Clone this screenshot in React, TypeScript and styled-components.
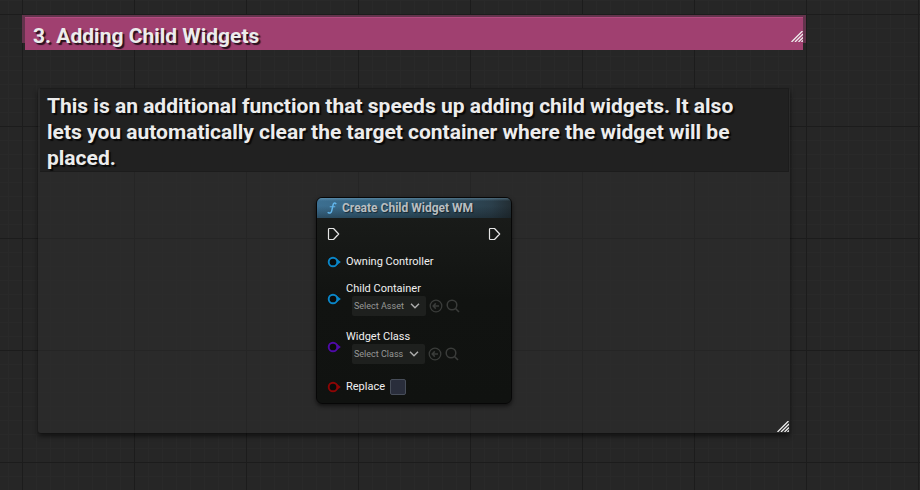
import React from "react";
import styled, { createGlobalStyle } from "styled-components";

const GlobalStyle = createGlobalStyle`
  * { box-sizing: border-box; }
  body {
    margin: 0;
    background: #262626;
    color: #ececec;
    font-family: Roboto, "Liberation Sans", sans-serif;
  }
  h1, h2, p { margin: 0; font: inherit; }
`;

const Canvas = styled.main`
  min-height: 100vh;
  padding: 15px 114px 56px 22px;
  background-color: #262626;
  background-image:
    linear-gradient(90deg, #1c1c1c 1px, transparent 1px),
    linear-gradient(#1c1c1c 1px, transparent 1px),
    linear-gradient(90deg, #292929 1px, transparent 1px),
    linear-gradient(#292929 1px, transparent 1px);
  background-size: 112px 112px, 112px 112px, 14px 14px, 14px 14px;
  background-position: 22px 14px, 22px 14px, 8px 0, 8px 0;
`;

const TitleComment = styled.section`
  padding: 2px 3px 0;
  background: linear-gradient(#63334c, #63334c) 0 0 / 100% 28px no-repeat;
`;

const TitleBar = styled.header`
  display: flex;
  align-items: center;
  justify-content: space-between;
  height: 33px;
  padding: 4px 0 0 8px;
  background: #a04070;
  border-top: 1px solid #b34c80;
`;

const heading = `
  font-size: 21px;
  line-height: 26px;
  font-weight: 700;
  text-shadow: 2px 2px 1px rgba(0, 0, 0, 0.75);
`;

const Title = styled.h1`
  && { ${heading} }
`;

const Comment = styled.section`
  display: flex;
  flex-direction: column;
  margin: 38px 16px 0;
  background: rgba(45, 45, 45, 0.55);
  border-radius: 3px;
  box-shadow: 0 3px 5px rgba(0, 0, 0, 0.6);
`;

const CommentHeader = styled.header`
  margin: 0 1px 0 2px;
  padding: 4px 24px 0 7px;
  background: #212121;
  border: 1px solid #1c1c1c;
  border-left: 0;
`;

const CommentText = styled.p`
  && { ${heading} }
`;

const CommentBody = styled.div`
  display: grid;
  justify-items: center;
  padding: 25px 1px 1px;
`;

const GripSvg = styled.svg`
  display: block;
  justify-self: end;
`;

const Node = styled.article`
  width: 196px;
  height: 207px;
  margin-bottom: 17px;
  border: 1px solid #070707;
  border-radius: 6px;
  overflow: hidden;
  background: linear-gradient(#1b1d1b, #111311 50%, #101210);
  box-shadow: 0 2px 4px rgba(0, 0, 0, 0.6);
`;

const NodeHeader = styled.header`
  display: flex;
  align-items: center;
  gap: 5px;
  height: 20px;
  padding-left: 10px;
  background:
    linear-gradient(rgba(140, 190, 220, 0.35), transparent 3px),
    linear-gradient(transparent 40%, rgba(15, 22, 26, 0.4)),
    linear-gradient(90deg, #3c6f91, #356079 40%, #2b3f4b 90%, #222d33);
`;

const NodeTitle = styled.h2`
  && {
    font-size: 12px;
    line-height: 16px;
    font-weight: 700;
    color: #b8bec1;
    text-shadow: 1px 1px 1px rgba(0, 0, 0, 0.5);
  }
`;

const ExecRow = styled.div`
  display: flex;
  justify-content: space-between;
  padding: 9px 10px 0;
`;

const PinRow = styled.div<{ $gap: number }>`
  display: flex;
  align-items: center;
  gap: 5px;
  margin-top: ${(p) => p.$gap}px;
  padding-left: 10px;
`;

const Field = styled.div`
  display: flex;
  flex-direction: column;
`;

const Label = styled.label`
  font-size: 11px;
  line-height: 14px;
  color: #f0f0f0;
`;

const Picker = styled.div`
  display: flex;
  align-items: center;
  gap: 3px;
  padding-left: 6px;
`;

const SelectBox = styled.div<{ $width: number }>`
  display: grid;
  grid-template-columns: 1fr 16px;
  align-items: center;
  width: ${(p) => p.$width}px;
  height: 20px;
  border-radius: 2px;
  background: #1e201e;
  svg { grid-area: 1 / 2; pointer-events: none; }
`;

const Select = styled.select`
  grid-area: 1 / 1 / 2 / 3;
  appearance: none;
  width: 100%;
  height: 20px;
  padding: 0 0 0 2px;
  border: 0;
  background: transparent;
  color: #969896;
  font: 9px/12px Roboto, "Liberation Sans", sans-serif;
`;

const IconButton = styled.button`
  display: flex;
  padding: 0;
  border: 0;
  background: none;
  color: #3a3c3a;
`;

const CheckBox = styled.input`
  appearance: none;
  width: 16px;
  height: 16px;
  margin: 0;
  border: 1px solid #474d59;
  border-radius: 2px;
  background: #292d3b;
`;

const Grip = () => (
  <GripSvg width="12" height="11" viewBox="0 0 12 11" stroke="#eee" strokeWidth="1.3" aria-hidden="true">
    <path d="M0.5 11L11.5 0M4 11L12 3M7.5 11L12 6.5M10.5 11L12 9.5" />
  </GripSvg>
);

const FunctionIcon = () => (
  <svg width="10" height="12" viewBox="0 0 10 12" fill="none" stroke="#62b5ea" strokeLinecap="round" aria-hidden="true">
    <path d="M8.8 1.6C7.6 .5 6.5 1.1 6.1 2.9L4.7 8.8C4.3 10.8 3 11.6 1.2 10.6" strokeWidth="1.5" />
    <path d="M3.2 4.8H7.8" strokeWidth="1.1" />
  </svg>
);

const ExecPin = () => (
  <svg width="13" height="14" viewBox="0 0 13 14" fill="none" stroke="#e4e4e4" strokeWidth="1.2" strokeLinejoin="round" aria-hidden="true">
    <path d="M2.3 1.5H6.5L11.7 7L6.5 12.5H2.3Q1.5 12.5 1.5 11.7V2.3Q1.5 1.5 2.3 1.5Z" />
  </svg>
);

const DataPin = ({ color }: { color: string }) => (
  <svg width="14" height="12" viewBox="0 0 14 12" aria-hidden="true">
    <circle cx="6" cy="6" r="4.3" fill="#090b0b" stroke={color} strokeWidth="1.9" />
    <path d="M10 3L13.8 6L10 9Z" fill={color} />
  </svg>
);

const Chevron = () => (
  <svg width="10" height="8" viewBox="0 0 10 8" fill="none" stroke="#aaa" strokeWidth="1.5" aria-hidden="true">
    <path d="M1 1.8L5 5.8L9 1.8" />
  </svg>
);

const UseIcon = () => (
  <svg width="14" height="14" viewBox="0 0 14 14" fill="none" stroke="currentColor" strokeWidth="1.3" aria-hidden="true">
    <circle cx="7" cy="7" r="5.8" />
    <path d="M10 7H4.5M6.8 4.4L4.2 7L6.8 9.6" strokeWidth="1.5" />
  </svg>
);

const SearchIcon = () => (
  <svg width="14" height="14" viewBox="0 0 14 14" fill="none" stroke="currentColor" strokeWidth="1.5" aria-hidden="true">
    <circle cx="6" cy="6" r="4.8" />
    <path d="M9.5 9.5L13 13" strokeWidth="1.6" />
  </svg>
);

type PickerProps = { id: string; label: string; value: string; width: number };

const PickerField = ({ id, label, value, width }: PickerProps) => (
  <Field>
    <Label htmlFor={id}>{label}</Label>
    <Picker>
      <SelectBox $width={width}>
        <Select id={id}>
          <option>{value}</option>
        </Select>
        <Chevron />
      </SelectBox>
      <IconButton type="button" aria-label={`Use selected for ${label}`}>
        <UseIcon />
      </IconButton>
      <IconButton type="button" aria-label={`Browse ${label}`}>
        <SearchIcon />
      </IconButton>
    </Picker>
  </Field>
);

export default function App() {
  return (
    <>
      <GlobalStyle />
      <Canvas>
        <TitleComment>
          <TitleBar>
            <Title>3. Adding Child Widgets</Title>
            <Grip />
          </TitleBar>
        </TitleComment>
        <Comment>
          <CommentHeader>
            <CommentText>
              This is an additional function that speeds up adding child widgets. It also lets you
              automatically clear the target container where the widget will be placed.
            </CommentText>
          </CommentHeader>
          <CommentBody>
            <Node>
              <NodeHeader>
                <FunctionIcon />
                <NodeTitle>Create Child Widget WM</NodeTitle>
              </NodeHeader>
              <ExecRow>
                <ExecPin />
                <ExecPin />
              </ExecRow>
              <PinRow $gap={14}>
                <DataPin color="#0a86c8" />
                <Label as="span">Owning Controller</Label>
              </PinRow>
              <PinRow $gap={13}>
                <DataPin color="#0a86c8" />
                <PickerField id="container" label="Child Container" value="Select Asset" width={74} />
              </PinRow>
              <PinRow $gap={14}>
                <DataPin color="#4f0aa8" />
                <PickerField id="class" label="Widget Class" value="Select Class" width={73} />
              </PinRow>
              <PinRow $gap={15}>
                <DataPin color="#8c0505" />
                <Label htmlFor="replace">Replace</Label>
                <CheckBox id="replace" type="checkbox" />
              </PinRow>
            </Node>
            <Grip />
          </CommentBody>
        </Comment>
      </Canvas>
    </>
  );
}
